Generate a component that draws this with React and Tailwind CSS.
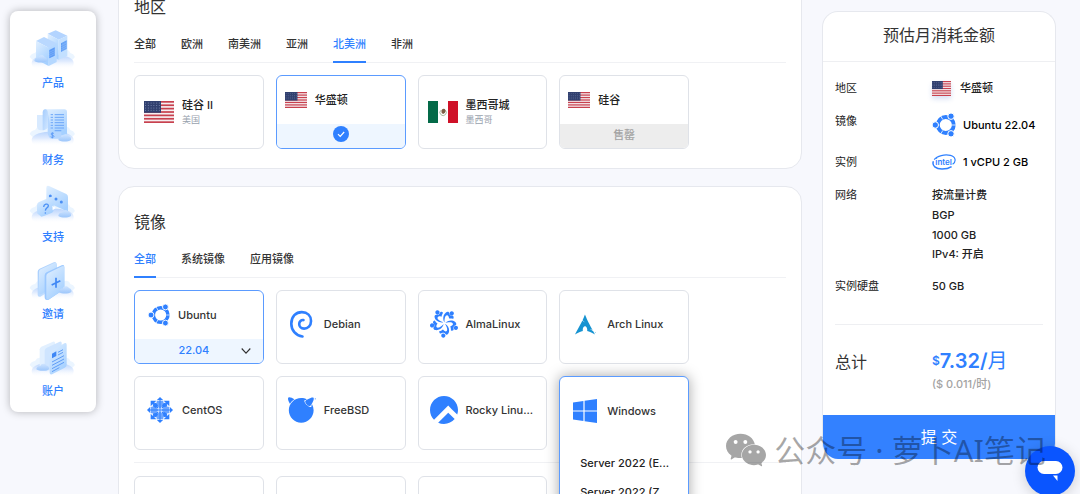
import React, { useState } from "react";
import { SiAlmalinux, SiArchlinux, SiFreebsd, SiRockylinux, SiWechat } from "react-icons/si";

function Cloud({ y }) {
  return (
    <g>
      <path d={`M90 ${y + 84}q4-10 16-12 8-14 20-8h66q14-6 20 8 10 2 14 12l-14 14H104Z`} fill="#e6f2ff" opacity="0.8" />
      <path d={`M96 ${y + 102}c0-34 126-34 126 0q0 14-14 18H110q-14-4-14-18Z`} fill="url(#mist)" />
    </g>
  );
}

function Puff({ x, y }) {
  return (
    <path
      d={`M${x} ${y}c0-8 8-11 12-10 2-9 16-9 19-1 5 0 8 5 7 11-10 6-28 6-38 0Z`}
      fill="url(#puff)"
    />
  );
}

function Defs() {
  return (
    <svg className="absolute h-0 w-0" aria-hidden="true">
      <defs>
        <linearGradient id="mist" x1="0" y1="0" x2="0" y2="1">
          <stop offset="0" stopColor="#b9d4fd" />
          <stop offset="0.45" stopColor="#deeafe" />
          <stop offset="1" stopColor="#ffffff" stopOpacity="0" />
        </linearGradient>
        <linearGradient id="puff" x1="0" y1="0" x2="0" y2="1">
          <stop offset="0" stopColor="#cfe4ff" />
          <stop offset="1" stopColor="#9cc6fb" />
        </linearGradient>
        <linearGradient id="face" x1="0" y1="0" x2="0.6" y2="1">
          <stop offset="0" stopColor="#e2f0ff" />
          <stop offset="1" stopColor="#a5d0ff" />
        </linearGradient>
        <linearGradient id="side" x1="0" y1="0" x2="1" y2="1">
          <stop offset="0" stopColor="#a4ccfd" />
          <stop offset="1" stopColor="#d3e8ff" />
        </linearGradient>
      </defs>
    </svg>
  );
}

function ProductArt() {
  return (
    <svg viewBox="88 85 144 120" className="h-10 w-12" aria-hidden="true">
      <Cloud y={85} />
      <path d="M144 99 168 89 203 105 177 117Z" fill="#b3d4ff" />
      <path d="M144 99 177 117V177L144 160Z" fill="url(#face)" />
      <path d="M177 117 203 105V165L177 177Z" fill="#c3e0ff" />
      <path d="M184 128 201 119V145L184 154Z" fill="#5f9ef7" />
      <path d="M190 125v26M196 122v26M184 135l17-9M184 142l17-9M184 148l17-9" stroke="#a9cffd" strokeWidth="1" />
      <path d="M109 121 133 109 171 128 147 141Z" fill="#b9d8ff" />
      <path d="M109 121 147 141V196L109 176Z" fill="url(#face)" />
      <path d="M147 141 171 128V184L147 196Z" fill="#b5d8ff" />
      <path d="M149 148 165 140V165L149 173Z" fill="#4f93f6" />
      <path d="M154 145v25M160 142v25M149 155l16-8M149 161l16-8M149 167l16-8" stroke="#a9cffd" strokeWidth="1" />
      <Puff x={104} y={181} />
    </svg>
  );
}

function FinanceArt() {
  return (
    <svg viewBox="88 316 144 120" className="h-10 w-12" aria-hidden="true">
      <Cloud y={316} />
      <path d="M112 343h20v46h-8q-12 0-12-12Z" fill="#d8eaff" />
      <path d="M129 336q1-10 8-10h57q8 0 8 8v70H150q-6 0-6-7V340Z" fill="url(#face)" />
      <path d="M129 336q1-10 8-10t8 12v42q-4 8-16 9Z" fill="url(#side)" />
      <path d="M145 340v56q0 18 14 18h26V394h-30Z" fill="#b4d6ff" />
      <path
        d="M153 342h7M153 350h7M153 358h7M153 366h7M153 374h7M153 382h7M165 342h28M165 350h28M165 358h28M165 366h28M165 374h28M165 382h28M165 390h20"
        stroke="#6ba6f9"
        strokeWidth="3"
      />
      <path d="M163 399c-2-3-9-2-9 1 0 4 9 3 9 7s-8 4-10 1M158 395v18" stroke="#5495f5" strokeWidth="2.5" fill="none" />
      <Puff x={176} y={418} />
    </svg>
  );
}

function SupportArt() {
  return (
    <svg viewBox="88 547 144 120" className="h-10 w-12" aria-hidden="true">
      <Cloud y={547} />
      <path d="M140 562q0-9 8-6l52 24q5 3 5 9v46l-16-9-41-18q-8-4-8-10Z" fill="url(#face)" />
      <circle cx="152" cy="586" r="4.5" fill="#4a8ff5" />
      <circle cx="169" cy="595" r="4.5" fill="#4a8ff5" />
      <circle cx="185" cy="604" r="4.5" fill="#4a8ff5" />
      <path d="M112 614q0-7 6-10l36-15q8-3 8 5v34q0 5-5 8l-22 9-10 3-7-6q-6-1-6-8Z" fill="url(#face)" />
      <path d="M132 619c0-8 13-13 14-4 0 7-8 6-9 15" stroke="#4a8ff5" strokeWidth="4" fill="none" />
      <circle cx="137" cy="637" r="2.4" fill="#4a8ff5" />
      <path d="m158 615 10 7-9 7Z" fill="#fff" />
      <Puff x={176} y={646} />
    </svg>
  );
}

function InviteArt() {
  return (
    <svg viewBox="88 178 144 120" className="h-10 w-12" aria-hidden="true">
      <Cloud y={178} />
      <path d="M114 213q0-6 6-9l42-19q8-4 8 5v68l-48 30q-8 2-8-6Z" fill="url(#side)" />
      <path d="M118 214q0-6 5-8l41-19q8-3 8 5v60l-46 28q-8 2-8-6Z" fill="url(#face)" />
      <path d="M135 224q0-6 6-9l45-21q8-4 8 5v66l-47 32q-12 3-12-7Z" fill="#9bc8ff" />
      <path d="M140 226q0-6 6-9l41-20q7-3 7 4v64l-46 31q-8 3-8-5Z" fill="url(#face)" />
      <path d="M169 231v30M156 253l26-13" stroke="#3f87f5" strokeWidth="5" />
      <Puff x={177} y={274} />
    </svg>
  );
}

function AccountArt() {
  return (
    <svg viewBox="88 409 144 120" className="h-10 w-12" aria-hidden="true">
      <Cloud y={409} />
      <path d="M120 446q0-5 5-8l35-15q6-2 6 4v62l-40 17q-6 2-6-5Z" fill="#e2f0ff" />
      <path d="M135 450q0-5 5-8l40-19q6-2 6 4v64l-45 20q-6 2-6-5Z" fill="#cfe5ff" />
      <path d="M150 459q0-6 6-9l38-22q7-4 7 4v60q0 6-6 9l-38 20q-7 2-7-5Z" fill="url(#face)" />
      <path d="M157 459 170 452V466L157 473Z" fill="#3f87f5" />
      <path d="m175 455 15-8M175 463l15-8M157 484l36-19M157 494l36-19M157 504l36-19M157 513l22-12" stroke="#5f9df7" strokeWidth="3" />
      <Puff x={110} y={506} />
    </svg>
  );
}

const nav = [
  { label: "产品", Art: ProductArt },
  { label: "财务", Art: FinanceArt },
  { label: "支持", Art: SupportArt },
  { label: "邀请", Art: InviteArt },
  { label: "账户", Art: AccountArt },
];

function UsFlag({ className }) {
  return (
    <svg viewBox="0 0 30 22" preserveAspectRatio="none" className={className} aria-hidden="true">
      <rect width="30" height="22" fill="#f6eff1" />
      {[0, 1, 2, 3, 4, 5, 6].map((i) => (
        <rect key={i} y={i * 3.385} width="30" height="1.7" fill="#c8414f" />
      ))}
      <rect width="17" height="11.8" fill="#31406f" />
      {[1.6, 4, 6.4, 8.8].map((y) =>
        [1.5, 4.3, 7.1, 9.9, 12.7, 15.3].map((x) => (
          <circle key={`${x}-${y}`} cx={x} cy={y + 0.5} r="0.5" fill="#8390b8" />
        ))
      )}
    </svg>
  );
}

function MxFlag({ className }) {
  return (
    <svg viewBox="0 0 30 22" className={className} aria-hidden="true">
      <rect width="30" height="22" fill="#fff" />
      <rect width="10" height="22" fill="#046a48" />
      <rect x="20" width="10" height="22" fill="#cf1128" />
      <path d="M12.6 9.4a3.2 3.2 0 1 0 5 0" fill="none" stroke="#a9c0a2" strokeWidth="1" />
      <path d="M13.4 9.4q1-2.4 3.4-1.4 1.8 1.8.2 3.8l-1.8 1.2q-2.2-.8-1.8-3.6Z" fill="#7c5f45" />
    </svg>
  );
}

function UbuntuLogo({ className }) {
  return (
    <svg viewBox="0 0 24 24" className={className} aria-hidden="true">
      <circle cx="13.8" cy="12" r="8" fill="none" stroke="#2f80ff" strokeWidth="3.8" />
      <path d="M20 12h4M10.8 6.6 8.6 2.8M10.8 17.4l-2.2 3.8" stroke="#fff" strokeWidth="0.8" />
      <g fill="#2f80ff" stroke="#fff" strokeWidth="1">
        <circle cx="3.3" cy="12" r="3.2" />
        <circle cx="19" cy="3.2" r="3.2" />
        <circle cx="19" cy="20.8" r="3.2" />
      </g>
    </svg>
  );
}

function DebianLogo({ className }) {
  return (
    <svg viewBox="510 390 76 90" className={className} fill="none" aria-hidden="true">
      <path
        d="M551 473c-21-3-34-20-34-39 0-22 14-35 32-35 17 0 28 11 28 27 0 14-10 23-21 23-10 0-15-7-15-14 0-8 6-13 13-12"
        stroke="#2f80ff"
        strokeWidth="8"
        strokeLinecap="round"
      />
    </svg>
  );
}

function CentosLogo({ className }) {
  return (
    <svg viewBox="-39 -39 78 78" className={className} aria-hidden="true">
      {[0, 90, 180, 270].map((angle) => (
        <g key={angle} transform={`rotate(${angle})`}>
          <path d="M0-39 10-29H-10Z" fill="#2f80ff" />
          <path d="M-10-27H10V-14L0-4-10-14Z" fill="#6ba5ff" />
          <path d="M0-32V0" stroke="#2f80ff" strokeWidth="3" />
          <path d="M11-28H28V-11L22-17 6-4 4-6 17-22Z" fill="#2f80ff" />
          <path d="M14-21 8-10M21-14 10-8" stroke="#2f80ff" strokeWidth="6" />
        </g>
      ))}
    </svg>
  );
}

function WindowsLogo({ className }) {
  return (
    <svg viewBox="0 0 24 24" className={className} fill="#2f80ff" aria-hidden="true">
      <path d="M0 3.6 10.4 2v9.4H0ZM11.6 1.8 24 0v11.4H11.6ZM0 12.6h10.4V22L0 20.4ZM11.6 12.6H24V24l-12.4-1.8Z" />
    </svg>
  );
}

function IntelLogo({ className }) {
  return (
    <svg viewBox="0 0 24 16" className={className} aria-hidden="true">
      <path d="M2.2 5.6C5 1.6 13 .2 18.4 1.4c5.6 1.4 6 6.2 2.2 8.8" fill="none" stroke="#2f80ff" strokeWidth="1.2" />
      <path d="M1.4 7.2C-.4 12 4 15 10 15c4 0 7.4-1 9.6-2.4" fill="none" stroke="#2f80ff" strokeWidth="1.5" />
      <text x="11.6" y="11" textAnchor="middle" fill="#2f80ff" fontSize="8" fontWeight="600">intel</text>
    </svg>
  );
}

function Tabs({ items, initial, label }) {
  const [active, setActive] = useState(initial);
  return (
    <div role="tablist" aria-label={label} className="flex gap-[25px] border-b border-[#f0f1f4]">
      {items.map((item) => (
        <button
          key={item}
          type="button"
          role="tab"
          aria-selected={active === item}
          onClick={() => setActive(item)}
          className={
            active === item
              ? "-mb-px h-9 border-b-2 border-[#2f80ff] text-[11px] font-medium text-[#2f80ff]"
              : "-mb-px h-9 border-b-2 border-transparent text-[11px] font-medium text-[#333333]"
          }
        >
          {item}
        </button>
      ))}
    </div>
  );
}

function OsCard({ name, children }) {
  return (
    <button
      type="button"
      className="flex h-[74px] min-w-0 items-center gap-2 rounded-md border border-[#dfe2e8] bg-white pb-[6px] pl-[11px] text-left"
    >
      <span className="flex w-7 shrink-0 justify-center text-[#2f80ff]">{children}</span>
      <span className="whitespace-nowrap text-[11px] font-medium text-[#333333]">{name}</span>
    </button>
  );
}

function RegionCard({ name, country, flag }) {
  return (
    <button
      type="button"
      className="flex h-[74px] items-center gap-2 rounded-md border border-[#dfe2e8] bg-white pl-[9px] text-left"
    >
      {flag}
      <span className="flex flex-col">
        <span className="text-[11px] font-medium leading-4 text-[#222222]">{name}</span>
        <span className="text-[9px] leading-[14px] text-[#98a2ae]">{country}</span>
      </span>
    </button>
  );
}

function Row({ label, children }) {
  return (
    <div className="flex">
      <dt className="w-[97px] shrink-0 font-normal text-[#222222]">{label}</dt>
      <dd className="min-w-0">{children}</dd>
    </div>
  );
}

export default function App() {
  return (
    <div className="relative flex h-screen items-start overflow-hidden bg-[#f7f8fd] pl-[10px] pr-6 font-['Inter','Noto_Sans_CJK_SC',sans-serif] text-[11px] leading-5 text-[#222222]">
      <Defs />
      <nav className="mt-[11px] flex w-[86px] shrink-0 flex-col items-center gap-3 rounded-lg bg-white pb-[10px] pt-[18px] shadow-[0_0_8px_rgba(0,0,0,0.28)]">
        {nav.map(({ label, Art }) => (
          <a key={label} href="#" className="flex h-[65px] flex-col items-center gap-1 font-medium text-[#2f80ff]">
            <Art />
            <span>{label}</span>
          </a>
        ))}
      </nav>

      <main className="-mt-[29px] ml-[22px] mr-5 flex min-w-0 flex-1 flex-col gap-[17px]">
        <section className="rounded-2xl border border-[#e6e8ee] bg-white px-[15px] pb-[19px] pt-[23px]">
          <h2 className="text-base leading-6 text-[#333333]">地区</h2>
          <div className="mt-2">
            <Tabs label="地区" initial="北美洲" items={["全部", "欧洲", "南美洲", "亚洲", "北美洲", "非洲"]} />
          </div>
          <div className="mt-3 grid max-w-[555px] grid-cols-4 gap-3">
            <RegionCard name="硅谷 II" country="美国" flag={<UsFlag className="h-[22px] w-[30px]" />} />
            <button type="button" aria-pressed="true" className="flex h-[74px] flex-col overflow-hidden rounded-md border border-[#5b9bff] bg-white">
              <span className="flex w-full flex-1 items-center gap-2 pl-2">
                <UsFlag className="h-4 w-[22px]" />
                <span className="font-medium">华盛顿</span>
              </span>
              <span className="flex h-6 w-full items-center justify-center bg-[#eef6ff] pb-1">
                <svg viewBox="0 0 16 16" className="h-4 w-4" aria-hidden="true">
                  <circle cx="8" cy="8" r="8" fill="#2f80ff" />
                  <path d="m5 8.2 2.2 2.2 4-4.4" fill="none" stroke="#fff" strokeWidth="1.2" />
                </svg>
              </span>
            </button>
            <RegionCard name="墨西哥城" country="墨西哥" flag={<MxFlag className="h-[22px] w-[30px]" />} />
            <button type="button" disabled className="flex h-[74px] flex-col overflow-hidden rounded-md border border-[#dfe2e8] bg-white">
              <span className="flex w-full flex-1 items-center gap-2 pl-2">
                <UsFlag className="h-4 w-[22px]" />
                <span className="font-medium">硅谷</span>
              </span>
              <span className="flex h-6 w-full items-center justify-center bg-[#ededed] pb-[2px] font-medium text-[#a3a3a3]">
                售罄
              </span>
            </button>
          </div>
        </section>

        <section className="rounded-2xl border border-[#e6e8ee] bg-white px-[15px] pb-6 pt-[23px]">
          <h2 className="text-base leading-6 text-[#333333]">镜像</h2>
          <div className="mt-2">
            <Tabs label="镜像" initial="全部" items={["全部", "系统镜像", "应用镜像"]} />
          </div>
          <div className="mt-3 grid max-w-[555px] grid-cols-4 gap-3">
            <div className="flex h-[74px] flex-col overflow-hidden rounded-md border border-[#5b9bff] bg-white">
              <div className="flex flex-1 items-center gap-2 pl-[13px]">
                <UbuntuLogo className="h-[22px] w-[22px]" />
                <span className="font-medium text-[#333333]">Ubuntu</span>
              </div>
              <div className="relative h-6 bg-[#eef6ff]">
                <select
                  aria-label="Ubuntu"
                  className="h-6 w-full appearance-none bg-transparent pb-[2px] pr-[10px] text-center font-medium text-[#2f80ff] [text-align-last:center]"
                >
                  <option>22.04</option>
                </select>
                <svg viewBox="0 0 10 6" className="pointer-events-none absolute right-3 top-[9px] h-[6px] w-[10px]" aria-hidden="true">
                  <path d="m.7.5 4.3 4.6L9.3.5" fill="none" stroke="#333" strokeWidth="1.1" />
                </svg>
              </div>
            </div>
            <OsCard name="Debian">
              <DebianLogo className="h-[30px] w-[25px]" />
            </OsCard>
            <OsCard name="AlmaLinux">
              <SiAlmalinux className="h-7 w-7" />
            </OsCard>
            <OsCard name="Arch Linux">
              <SiArchlinux className="h-[21px] w-[21px] text-[#1793d1]" />
            </OsCard>
            <OsCard name="CentOS">
              <CentosLogo className="h-[26px] w-[26px]" />
            </OsCard>
            <OsCard name="FreeBSD">
              <SiFreebsd className="h-7 w-7" />
            </OsCard>
            <OsCard name="Rocky Linu...">
              <SiRockylinux className="h-7 w-7" />
            </OsCard>
            <div className="relative z-10 h-[74px]">
              <div className="absolute inset-x-0 top-0 rounded-md border border-[#5b9bff] bg-white pb-3 shadow-[0_0_14px_rgba(0,0,0,0.35)]">
                <div className="flex h-[68px] items-center gap-2 pl-[11px]">
                  <span className="flex w-7 justify-center">
                    <WindowsLogo className="h-6 w-6" />
                  </span>
                  <span className="font-medium text-[#333333]">Windows</span>
                </div>
                <div className="flex flex-col gap-[9px] pl-5 pt-2">
                  {["Server 2022 (E...", "Server 2022 (Z..."].map((version) => (
                    <button key={version} type="button" className="whitespace-nowrap text-left font-medium text-[#222222]">
                      {version}
                    </button>
                  ))}
                </div>
              </div>
            </div>
          </div>
          <div className="mt-3 border-t border-[#f0f1f4] pt-[13px]">
            <div className="grid max-w-[555px] grid-cols-4 gap-3">
              {["a", "b", "c", "d"].map((key) => (
                <div key={key} className="h-[74px] rounded-md border border-[#dfe2e8]" />
              ))}
            </div>
          </div>
        </section>
      </main>

      <aside className="mt-[11px] w-[234px] shrink-0 overflow-hidden rounded-2xl border border-b-0 border-[#e6e8ee] bg-white">
        <h2 className="flex h-[50px] items-center justify-center border-b border-[#eeeff2] pb-[3px] text-base text-[#333333]">
          预估月消耗金额
        </h2>
        <dl className="mx-3 flex flex-col gap-[13px] border-b border-[#eeeff2] pb-7 pt-4 font-medium">
          <Row label="地区">
            <span className="flex items-center gap-[9px]">
              <UsFlag className="h-[15px] w-[19px] shadow-[0_3px_5px_rgba(60,100,200,0.2)]" />
              华盛顿
            </span>
          </Row>
          <Row label="镜像">
            <span className="flex h-7 items-center gap-[7px] whitespace-nowrap text-black">
              <UbuntuLogo className="h-6 w-6" />
              Ubuntu 22.04
            </span>
          </Row>
          <Row label="实例">
            <span className="flex items-center gap-[7px] whitespace-nowrap text-black">
              <IntelLogo className="h-4 w-6" />1 vCPU 2 GB
            </span>
          </Row>
          <Row label="网络">
            <ul>
              <li>按流量计费</li>
              <li>BGP</li>
              <li>1000 GB</li>
              <li className="leading-[18px]">IPv4: 开启</li>
            </ul>
          </Row>
          <Row label="实例硬盘">50 GB</Row>
        </dl>
        <div className="mx-3 flex h-[90px] pt-[22px]">
          <div className="w-[97px] shrink-0 pt-[3px] text-base leading-6 text-[#333333]">总计</div>
          <div>
            <p className="flex items-center leading-8 text-[#2f80ff]">
              <span className="text-xs font-semibold">$</span>
              <span className="text-xl font-semibold">7.32/</span>
              <span className="text-xl">月</span>
            </p>
            <p className="font-medium leading-[18px] text-[#a3a3a3]">($ 0.011/时)</p>
          </div>
        </div>
        <button type="button" className="h-11 w-full bg-[#3381ff] text-base text-white">
          提 交
        </button>
      </aside>

      <button
        type="button"
        aria-label="Chat"
        className="absolute bottom-[-2px] right-[5px] z-20 flex h-[50px] w-[50px] items-center justify-center rounded-full bg-[#0a55ff] shadow-[0_2px_14px_rgba(0,0,0,0.18)]"
      >
        <svg viewBox="0 0 26 20" className="h-5 w-[26px]" fill="#fff" aria-hidden="true">
          <rect x="0.5" y="0" width="25" height="13" rx="6.5" />
          <path d="M16 14.5h4.5V20Z" />
        </svg>
      </button>

      <div className="pointer-events-none absolute bottom-6 right-[34px] z-30 flex items-center gap-2 whitespace-nowrap text-[31px] leading-10 text-black/35">
        <SiWechat className="h-10 w-10" />
        <span className="font-['Noto_Sans','Noto_Sans_CJK_SC',sans-serif] font-normal">公众号 · 萝卜AI笔记</span>
      </div>
    </div>
  );
}
